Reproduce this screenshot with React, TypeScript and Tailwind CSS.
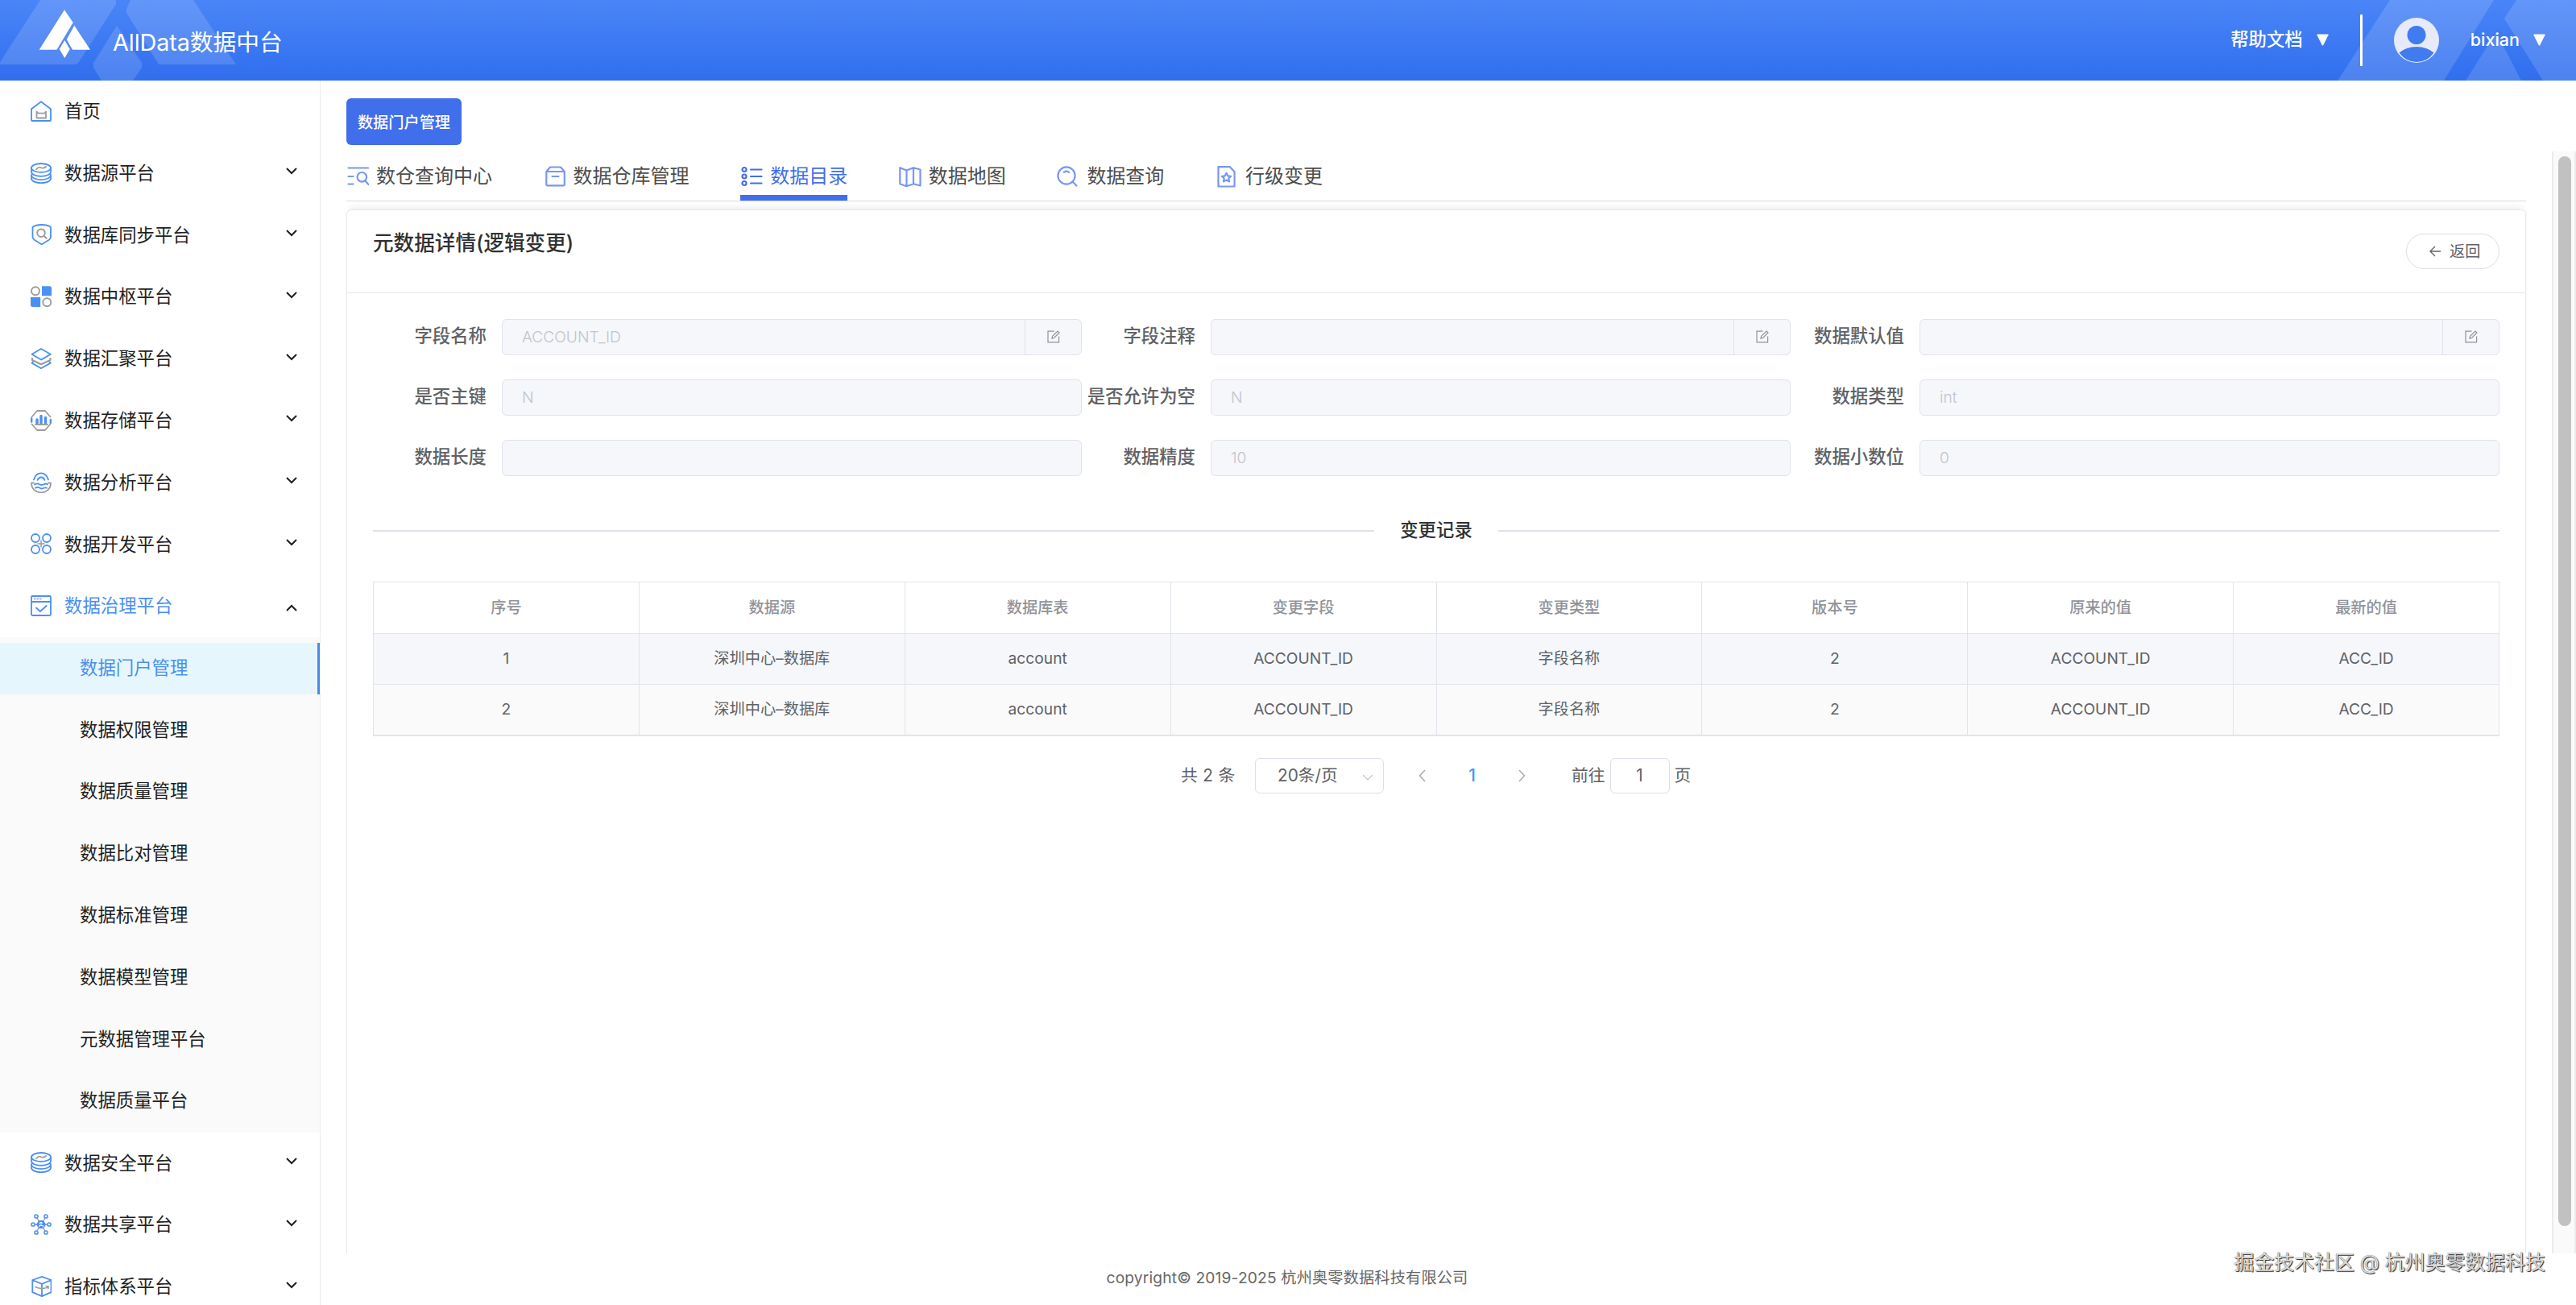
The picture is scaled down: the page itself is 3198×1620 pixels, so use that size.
import type { ReactNode } from 'react';
import clsx from 'clsx';

const BLUE = '#4a90f5';
const GRAY = '#9c9c9c';

/* ---------- Icons ---------- */

function MenuSvg({ children }: { children: ReactNode }) {
  return (
    <svg
      className="h-[26px] w-[26px] shrink-0"
      viewBox="0 0 26 26"
      fill="none"
      stroke={BLUE}
      strokeWidth="1.8"
      strokeLinejoin="round"
      strokeLinecap="round"
      aria-hidden="true"
    >
      {children}
    </svg>
  );
}

const menuIcons: Record<string, ReactNode> = {
  home: (
    <MenuSvg>
      <path d="M13 1.2 25 10.2V24a1 1 0 0 1-1 1H2a1 1 0 0 1-1-1V10.2z" />
      <path d="M7.500 13.500V21.500h11.500V13.500l-2 2.200h-7.500z" stroke={GRAY} />
    </MenuSvg>
  ),
  database: (
    <MenuSvg>
      <ellipse cx="13" cy="6.4" rx="12" ry="5.4" />
      <path d="M1 6.4v5c0 3 5.4 5.400 12 5.400s12-2.400 12-5.400v-5" />
      <path d="M1.800 14Q1 15 1 16.200v3.600c0 3 5.400 5.400 12 5.400s12-2.400 12-5.400v-3.600Q25 15 24.200 14" />
      <path d="M1.200 16.500c.8 2.600 5.800 4.600 11.800 4.600s11-2 11.800-4.600" />
      <path d="M7 8.200c2-2.600 4-3 6-2 2 .9 4 .6 6-1.200" stroke={GRAY} />
    </MenuSvg>
  ),
  shield: (
    <MenuSvg>
      <path d="M2.500 4C6 1.400 10 1 13.700 1S21.500 1.400 25 4v12c0 1.500-.6 2.600-1.800 3.400L13.700 25.400 4.300 19.400C3 18.600 2.500 17.500 2.500 16z" />
      <circle cx="13" cy="11.200" r="4.800" stroke={GRAY} strokeWidth="2" />
      <path d="m16.600 15 3 2.800" stroke={GRAY} strokeWidth="2.200" />
    </MenuSvg>
  ),
  grid: (
    <MenuSvg>
      <circle cx="6" cy="6.200" r="5" stroke={GRAY} strokeWidth="1.900" />
      <circle cx="20.300" cy="20.200" r="5" stroke={GRAY} strokeWidth="1.900" />
      <path
        d="M14 .2h9.500a2.500 2.500 0 0 1 2.500 2.500V12.200H14zM0 14h12.200v12H2.500A2.500 2.500 0 0 1 0 23.500z"
        fill={BLUE}
        stroke="none"
      />
    </MenuSvg>
  ),
  layers: (
    <MenuSvg>
      <path d="M2 13v2l11 5.300L24.500 15v-2" stroke={GRAY} strokeWidth="2.200" />
      <path d="M13 1 24.800 7.800 13 14.600 1.500 7.800z" fill="#fff" />
      <path d="m3 17.200-1.500 1.400L13 25.200l11.800-6.600-1.500-1.400" />
    </MenuSvg>
  ),
  storage: (
    <MenuSvg>
      <path d="M1.500 8.500 8 1h10l6.500 7.500M1.500 17.500 8 25h10l6.500-7.500" stroke={GRAY} />
      <path d="M1.200 10.500v4M24.800 12v4" strokeWidth="2.400" />
      <path d="M8 12v4.500M13 7.500v9M18.500 9.500v7" strokeWidth="3.400" />
      <path d="M6 18h15" stroke={GRAY} />
    </MenuSvg>
  ),
  analysis: (
    <MenuSvg>
      <path d="M4 9.500C5.500 4 9 1.300 13 1.300S20.500 4 22 9.500M8.500 9.800C9.500 7.500 11 6.500 13 6.500s3.500 1 4.500 3.300" />
      <path d="M4 13.500H1c0 7 5 11.800 12 11.800s12-4.800 12-11.800h-3" stroke={GRAY} />
      <path d="M5 15.500c2.500-2 4-1.500 6-.3 2.500 1.400 4 .8 5.500 0 1.500-.9 3-1 4.500 0M6 19.800c2.500-1.600 4-1 5.500 0 2 1.200 3.500.8 5 0 1.200-.6 2.500-.6 3.500 0" />
    </MenuSvg>
  ),
  dev: (
    <MenuSvg>
      <path d="M13 9v8M9 13h8" stroke={GRAY} strokeWidth="1.500" />
      <circle cx="6" cy="6" r="5" />
      <circle cx="20" cy="6" r="5" />
      <circle cx="6" cy="20" r="5" />
      <circle cx="20" cy="20" r="5" />
    </MenuSvg>
  ),
  governance: (
    <MenuSvg>
      <rect x="1" y="1" width="24" height="24" rx="1.200" />
      <path d="M1 8h24M7 15.500l4.800 4.500 8-7" />
      <path d="M4.500 4.500h1.400M8 4.500h1.400M11.500 4.500h1.400" stroke={GRAY} strokeWidth="1.500" />
    </MenuSvg>
  ),
  share: (
    <MenuSvg>
      <path d="M8 5l3 5M18 5l-3 5M8 21l3-5M18 21l-3-5M5 13h4M17 13h4" stroke={GRAY} strokeWidth="1.400" />
      <g strokeWidth="1.500">
        <circle cx="7" cy="3" r="2.100" />
        <circle cx="19" cy="3" r="2.100" />
        <circle cx="7" cy="23" r="2.100" />
        <circle cx="19" cy="23" r="2.100" />
        <circle cx="3" cy="13" r="2.100" />
        <circle cx="23" cy="13" r="2.100" />
      </g>
      <path d="M10.500 9h5l2.500 4-2.500 4h-5L8 13z" fill={BLUE} />
      <path d="M10.500 16v-1.500h5V16M12 10.500h2v2h-2z" stroke="#fff" strokeWidth="1" />
    </MenuSvg>
  ),
  cube: (
    <MenuSvg>
      <path d="M14 .9 25.500 5v15.200L14 25.200 2.300 20.200V5zM2.300 5 14 9.800 25.500 5M14 9.800v15.400" />
      <path d="M6 13.500c3 1.600 5 2 8 2 3.500 0 6-.3 8-2.500M19 12.500l3.300.4-.6 3" stroke={GRAY} strokeWidth="1.500" />
    </MenuSvg>
  ),
};

function TabSvg({ children }: { children: ReactNode }) {
  return (
    <svg
      className="h-7 w-7 shrink-0"
      viewBox="0 0 28 28"
      fill="none"
      stroke="currentColor"
      strokeWidth="2.200"
      strokeLinejoin="round"
      strokeLinecap="round"
      aria-hidden="true"
    >
      {children}
    </svg>
  );
}

function EditIcon() {
  return (
    <svg className="h-4 w-4" viewBox="0 0 16 16" fill="none" stroke="#909399" strokeWidth="1.200" aria-hidden="true">
      <path d="M8.500 1.200H1v13.600h13.600V7.500" />
      <path d="M6 10.200l.6-2.800L13 1l2 2-6.400 6.500z" />
    </svg>
  );
}

function Chevron({ up }: { up?: boolean }) {
  return (
    <svg
      className={clsx('ml-auto h-[9px] w-[14px]', up ? 'mt-1' : '-mt-1')}
      viewBox="0 0 14 9"
      fill="none"
      stroke="#1f1f1f"
      strokeWidth="2"
      aria-hidden="true"
    >
      <path d={up ? 'M1 8 7 2l6 6' : 'M1 1l6 6 6-6'} />
    </svg>
  );
}

function Caret({ className }: { className?: string }) {
  return (
    <svg className={clsx('h-[15px] w-[15px]', className)} viewBox="0 0 15 15" fill="#fff" aria-hidden="true">
      <path d="M1 .5h13q1 0 .6 1L8.300 14q-.8 1-1.600 0L.4 1.500Q0 .5 1 .5z" />
    </svg>
  );
}

/* ---------- Data ---------- */

interface MenuItem {
  label: string;
  icon: string;
  leaf?: boolean;
  children?: string[];
}

const MENU: MenuItem[] = [
  { label: '首页', icon: 'home', leaf: true },
  { label: '数据源平台', icon: 'database' },
  { label: '数据库同步平台', icon: 'shield' },
  { label: '数据中枢平台', icon: 'grid' },
  { label: '数据汇聚平台', icon: 'layers' },
  { label: '数据存储平台', icon: 'storage' },
  { label: '数据分析平台', icon: 'analysis' },
  { label: '数据开发平台', icon: 'dev' },
  {
    label: '数据治理平台',
    icon: 'governance',
    children: [
      '数据门户管理',
      '数据权限管理',
      '数据质量管理',
      '数据比对管理',
      '数据标准管理',
      '数据模型管理',
      '元数据管理平台',
      '数据质量平台',
    ],
  },
  { label: '数据安全平台', icon: 'database' },
  { label: '数据共享平台', icon: 'share' },
  { label: '指标体系平台', icon: 'cube' },
];

const TABS = [
  {
    label: '数仓查询中心',
    icon: (
      <TabSvg>
        <path d="M2.500 3.500H27M2.500 14h6M2.500 23.500h6M23.500 19.500l4 4.500" />
        <circle cx="19.300" cy="14.800" r="5.800" />
      </TabSvg>
    ),
  },
  {
    label: '数据仓库管理',
    icon: (
      <TabSvg>
        <path d="M3.300 8 8 2.500h13L25.800 8v16a1.300 1.300 0 0 1-1.300 1.300h-20A1.300 1.300 0 0 1 3.300 24zM3.300 8h22.500M10.500 14h8" />
      </TabSvg>
    ),
  },
  {
    label: '数据目录',
    active: true,
    icon: (
      <TabSvg>
        <path d="M13 5.500h13.500M13 14h13.500M13 22.500h13.500" />
        <circle cx="5" cy="5.500" r="2.500" />
        <circle cx="5" cy="14" r="2.500" />
        <circle cx="5" cy="22.500" r="2.500" />
      </TabSvg>
    ),
  },
  {
    label: '数据地图',
    icon: (
      <TabSvg>
        <path d="M1.300 3.200 9.500 6.500 18 3.200l8.500 2.300v20L18 23.300l-8.500 2.900-8.200-2.900zM9.500 6.500v19.500M18 3.200v20" />
      </TabSvg>
    ),
  },
  {
    label: '数据查询',
    icon: (
      <TabSvg>
        <circle cx="12" cy="13" r="10.600" />
        <path d="m19.500 20.500 5 5M8.800 8.800c2-1.500 4.200-1.500 6.200 0" />
      </TabSvg>
    ),
  },
  {
    label: '行级变更',
    icon: (
      <TabSvg>
        <path d="M3.500 2.200H18l5.600 6V26.500H3.500z" />
        <path d="m13.500 9.800 1.700 3.500 3.900.5-2.800 2.700.7 3.900-3.500-1.900-3.500 1.900.7-3.900-2.800-2.700 3.900-.5z" />
      </TabSvg>
    ),
  },
];

const FIELDS = [
  { label: '字段名称', value: 'ACCOUNT_ID', editable: true },
  { label: '字段注释', value: '', editable: true },
  { label: '数据默认值', value: '', editable: true },
  { label: '是否主键', value: 'N' },
  { label: '是否允许为空', value: 'N' },
  { label: '数据类型', value: 'int' },
  { label: '数据长度', value: '' },
  { label: '数据精度', value: '10' },
  { label: '数据小数位', value: '0' },
];

const COLUMNS = ['序号', '数据源', '数据库表', '变更字段', '变更类型', '版本号', '原来的值', '最新的值'];

const ROWS = [
  ['1', '深圳中心–数据库', 'account', 'ACCOUNT_ID', '字段名称', '2', 'ACCOUNT_ID', 'ACC_ID'],
  ['2', '深圳中心–数据库', 'account', 'ACCOUNT_ID', '字段名称', '2', 'ACCOUNT_ID', 'ACC_ID'],
];

/* ---------- Sections ---------- */

function Header() {
  return (
    <header className="relative flex h-[100px] shrink-0 items-center bg-linear-to-b from-[#4a85f8] to-[#306eed] text-white">
      <svg className="absolute inset-0 h-full w-full" viewBox="0 0 3198 100" fill="#fff" fillOpacity="0.14" aria-hidden="true">
        <path d="M50 0h94v5L98 77l-3 3H0v-3z" />
        <path d="M162 0h78l53 80h-96l-40-64v-5z" />
        <path d="m145 32 31 46v6l-11 16h-39l-10-16v-6z" />
        <path d="M2967 0h129l-62 100h-132z" />
        <path d="M3124 0h74v100h-41l-48-77z" />
        <path d="m3061 100 38-60 31 60z" />
      </svg>
      <svg className="relative -mt-4 ml-12 h-[62px] w-16" viewBox="48 11 64 62" fill="#fff" aria-hidden="true">
        <path d="M80 12.300 90.700 28 70.500 61.700H48.700z" />
        <path d="M92.300 31.700 112 61.700H90L82.700 49z" />
        <path d="m80.300 50 6.400 11-6.400 11-6.600-11z" />
      </svg>
      <h1 className="relative mt-1.5 ml-[28px] text-[28.8px] leading-none tracking-[-0.1px]">AllData数据中台</h1>

      <div className="relative ml-auto flex items-center pr-[38px]">
        <span className="-mt-0.5 text-[22.4px] font-medium">帮助文档</span>
        <Caret className="-mt-0.5 ml-[17px]" />
        <span className="ml-[39px] h-16 w-[3px] bg-white" />
        <svg className="ml-[39px] h-14 w-14" viewBox="0 0 56 56" aria-hidden="true">
          <circle cx="28" cy="28" r="28" fill="#e6eaf9" />
          <circle cx="28" cy="21.500" r="11.500" fill="#417bf0" />
          <path d="M6.500 43.500Q15 36 28 36t21.500 7.500Q41 55 28 55T6.500 43.500z" fill="#417bf0" />
        </svg>
        <span className="-mt-0.5 ml-[39px] text-[21.5px] font-medium">bixian</span>
        <Caret className="-mt-0.5 ml-[17px]" />
      </div>
    </header>
  );
}

function Sidebar() {
  return (
    <aside className="w-[398px] shrink-0 overflow-hidden border-r border-[#ececec] text-[22.4px] text-[#1f1f1f]">
      {MENU.map((item) => (
        <div key={item.label}>
          <div
            className={clsx(
              'flex h-[76.8px] items-center gap-4 pr-7 pb-px pl-[38px]',
              item.children && 'text-[#4a8ff0]',
            )}
          >
            {menuIcons[item.icon]}
            <span>{item.label}</span>
            {!item.leaf && <Chevron up={!!item.children} />}
          </div>
          {item.children && (
            <ul className="bg-[#fafafa]">
              {item.children.map((child, i) => (
                <li key={child} className="flex h-[76.8px] items-center">
                  <span
                    className={clsx(
                      'flex h-16 w-full items-center pb-0.5 pl-[99px]',
                      i === 0 && 'border-r-[3px] border-[#4a8ae8] bg-[#e6f6fd] text-[#4a8ff0]',
                    )}
                  >
                    {child}
                  </span>
                </li>
              ))}
            </ul>
          )}
        </div>
      ))}
    </aside>
  );
}

function Tabs() {
  return (
    <nav className="relative z-10 mt-2 flex h-[54px] shrink-0 gap-[63.6px] border-b border-[#dadcdf] bg-white">
      {TABS.map((tab) => (
        <div
          key={tab.label}
          className={clsx(
            'flex h-[53px] items-center gap-[9px] border-b-[7px] text-2xl',
            tab.active ? 'border-[#416eeb] text-[#416eeb]' : 'border-transparent text-[#4d4d4d]',
          )}
        >
          <span className={tab.active ? 'text-[#416eeb]' : 'text-[#7897f3]'}>{tab.icon}</span>
          <span>{tab.label}</span>
        </div>
      ))}
    </nav>
  );
}

function DetailForm() {
  return (
    <div className="grid grid-cols-3 gap-y-[30px]">
      {FIELDS.map((field) => (
        <div key={field.label} className="flex h-[45px] items-center">
          <label className="flex w-[160px] shrink-0 justify-end pr-[19px] pb-[3px] text-[22.4px] font-medium whitespace-nowrap text-[#606266]">
            {field.label}
          </label>
          <div className="flex h-full flex-1 items-center rounded-md border border-[#dfe3ea] bg-[#f5f7fa] text-[19.2px] text-[#c0c4cc]">
            <span className="flex-1 pl-6 font-light">{field.value}</span>
            {field.editable && (
              <span className="flex h-full w-[70px] items-center justify-center border-l border-[#dfe3ea] pb-0.5">
                <EditIcon />
              </span>
            )}
          </div>
        </div>
      ))}
    </div>
  );
}

function ChangeTable() {
  return (
    <div className="border border-r-0 border-[#e1e4ea] text-[19.2px] text-[#606266]">
      <div className="grid h-16 grid-cols-8 font-medium text-[#909399]">
        {COLUMNS.map((column) => (
          <div key={column} className="flex items-center justify-center border-r border-b border-[#e1e4ea] pb-px">
            {column}
          </div>
        ))}
      </div>
      {ROWS.map((row, i) => (
        <div key={row[0]} className={clsx('grid h-[63px] grid-cols-8', i === 0 ? 'bg-[#f5f7fa]' : 'bg-[#fafafa]')}>
          {row.map((cell, j) => (
            <div key={j} className="flex items-center justify-center border-r border-b border-[#e1e4ea] pb-px">
              {cell}
            </div>
          ))}
        </div>
      ))}
    </div>
  );
}

function Pagination() {
  return (
    <div className="mt-[27px] flex h-[44px] items-center pl-[1003px] text-[20.8px] text-[#606266]">
      <span className="w-[92px] tracking-[0.3px]">共 2 条</span>
      <span className="flex h-full w-[160px] items-center justify-between rounded-md border border-[#dcdfe6] pr-[13px] pl-[27px]">
        20条/页
        <svg className="mt-1 h-2 w-3" viewBox="0 0 12 8" fill="none" stroke="#c0c4cc" strokeWidth="1.200">
          <path d="M0 1l6 6 6-6" />
        </svg>
      </span>
      <svg className="ml-[43px] h-4 w-[9px]" viewBox="0 0 9 16" fill="none" stroke="#a8abb2" strokeWidth="1.500">
        <path d="M8 1 1.500 8 8 15" />
      </svg>
      <span className="w-[115px] text-center font-medium text-[#4a94f5]">1</span>
      <svg className="h-4 w-[9px]" viewBox="0 0 9 16" fill="none" stroke="#a8abb2" strokeWidth="1.500">
        <path d="m1 1 6.500 7L1 15" />
      </svg>
      <span className="ml-[57px]">前往</span>
      <span className="mx-[6px] flex h-full w-[74px] items-center justify-center rounded-md border border-[#dcdfe6]">1</span>
      <span>页</span>
    </div>
  );
}

function DetailCard() {
  return (
    <section className="mt-[10px] flex-1 rounded-t-md border border-b-0 border-[#e6e8ec] bg-white shadow-[0_-6px_10px_-4px_rgba(0,0,0,0.08)]">
      <div className="flex h-[103px] justify-between border-b border-[#e6e8ec] px-8">
        <h2 className="pt-[22px] text-[25.6px] leading-[38px] font-medium text-[#303133]">元数据详情(逻辑变更)</h2>
        <button
          type="button"
          className="mt-[29px] flex h-[44px] w-[116px] items-center rounded-full border border-[#dcdfe6] pl-7 text-[19.2px] text-[#606266]"
        >
          <svg className="mr-[11px] h-[14px] w-[14px]" viewBox="0 0 14 14" fill="none" stroke="#606266" strokeWidth="1.300">
            <path d="M14 7H1M7 1 1 7l6 6" />
          </svg>
          返回
        </button>
      </div>
      <div className="px-8 pt-8">
        <DetailForm />
        <div className="mt-[51px] mb-[46px] flex h-[34px] items-center gap-8">
          <span className="h-[2px] flex-1 bg-[#dfe1e6]" />
          <span className="pb-[3px] text-[22.4px] font-medium text-[#303133]">变更记录</span>
          <span className="h-[2px] flex-1 bg-[#dfe1e6]" />
        </div>
        <ChangeTable />
        <Pagination />
      </div>
    </section>
  );
}

export default function App() {
  return (
    <div className="relative flex h-[1620px] w-[3198px] flex-col overflow-hidden bg-white font-[Inter,'Noto_Sans_CJK_SC',sans-serif]">
      <Header />
      <div className="flex min-h-0 flex-1">
        <Sidebar />
        <main className="flex min-w-0 flex-1 flex-col">
          <div className="h-[88px] shrink-0 pt-[22px] pl-8">
            <span className="flex h-[58px] w-[143px] items-center justify-center rounded-md bg-[#416eeb] pt-0.5 text-[19.2px] font-medium text-white">
              数据门户管理
            </span>
          </div>
          <div className="flex min-h-0 flex-1">
            <div className="flex min-w-0 flex-1 flex-col overflow-hidden px-8">
              <Tabs />
              <DetailCard />
            </div>
            {/* Scrollbar */}
            <div className="w-[30px] shrink-0 border-x-2 border-[#ebebeb] bg-[#fafafa] pt-[6px] pl-[6px]">
              <div className="h-[1328px] w-4 rounded-full bg-[#c1c1c1]" />
            </div>
          </div>
          <footer className="flex h-16 shrink-0 items-center justify-center pr-[400px] pb-1 text-[19.2px] tracking-[0.16px] text-[#666]">
            copyright© 2019-2025 杭州奥零数据科技有限公司
          </footer>
        </main>
      </div>
      <div className="absolute right-[38px] bottom-[35px] text-[24.9px] leading-9 whitespace-nowrap text-[#dcdcdc] [text-shadow:1px_1px_1px_#222,0_0_1px_#555]">
        掘金技术社区 @ 杭州奥零数据科技
      </div>
    </div>
  );
}
